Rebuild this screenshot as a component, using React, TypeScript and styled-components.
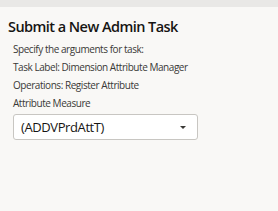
import styled, { createGlobalStyle } from 'styled-components'

const Global = createGlobalStyle`
  body {
    margin: 0;
    background: #f9f8f6;
    font-family: 'Open Sans', 'Noto Sans', sans-serif;
    color: #161513;
  }
`

const TopBar = styled.div`
  height: 7px;
  background: #e9e8e6;
`

const Page = styled.div`
  padding: 10px 0 0 8px;
`

const Title = styled.h1`
  margin: 0 0 3px;
  font-size: 14.5px;
  font-weight: 600;
  line-height: 20px;
  letter-spacing: -0.55px;
`

const Body = styled.div`
  padding-left: 5px;
  display: flex;
  flex-direction: column;
`

const Line = styled.div`
  font-size: 10px;
  line-height: 18px;
  color: #3a3936;
  letter-spacing: -0.45px;
`

const Select = styled.div`
  margin-top: 2px;
  width: 185px;
  height: 26px;
  box-sizing: border-box;
  border: 1px solid #c8c6c2;
  border-radius: 3px;
  background: #fff;
  display: flex;
  align-items: center;
  padding: 0 11px 0 7px;
  font-size: 13px;
  letter-spacing: -0.4px;
  color: #161513;
`

const Value = styled.span`
  flex: 1;
`

const Caret = styled.span`
  width: 0;
  height: 0;
  border-left: 3px solid transparent;
  border-right: 3px solid transparent;
  border-top: 3px solid #3a3936;
`

export default function App() {
  return (
    <>
      <Global />
      <TopBar />
      <Page>
        <Title>Submit a New Admin Task</Title>
        <Body>
          <Line>Specify the arguments for task:</Line>
          <Line>Task Label: Dimension Attribute Manager</Line>
          <Line>Operations: Register Attribute</Line>
          <Line>Attribute Measure</Line>
          <Select>
            <Value>(ADDVPrdAttT)</Value>
            <Caret />
          </Select>
        </Body>
      </Page>
    </>
  )
}
